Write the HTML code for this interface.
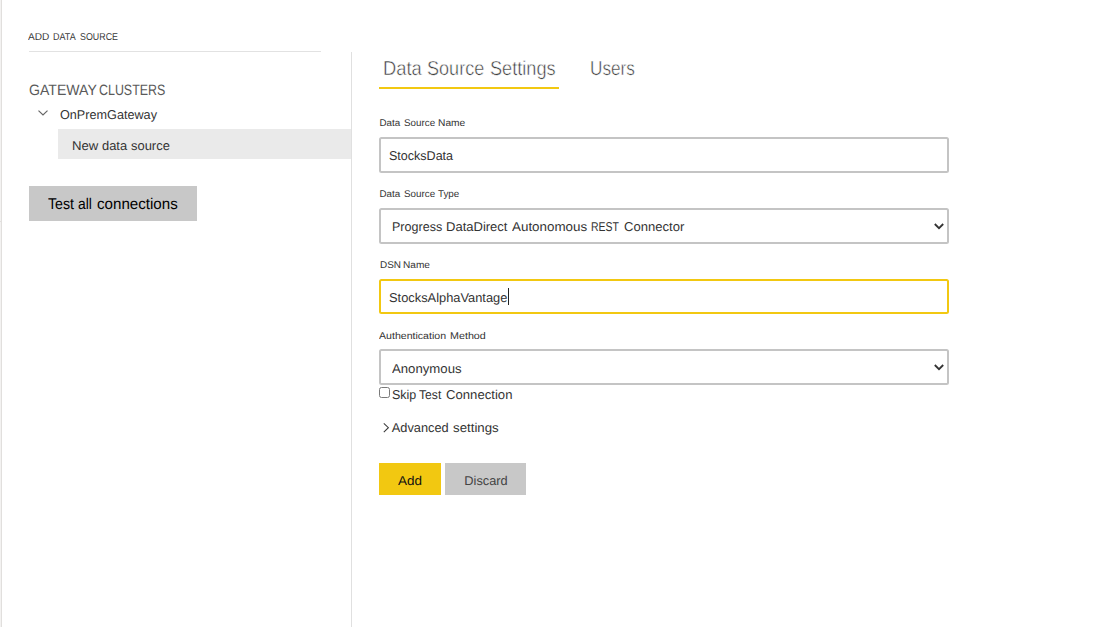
<!DOCTYPE html>
<html><head><meta charset="utf-8">
<style>
html,body{margin:0;padding:0;background:#fff;}
body{width:1112px;height:627px;position:relative;overflow:hidden;font-family:"Liberation Sans",sans-serif;color:#333;text-rendering:geometricPrecision;}
.abs{position:absolute;}
.w{position:absolute;display:inline-block;white-space:nowrap;line-height:30px;transform-origin:0 0;}
.box{position:absolute;left:379px;width:570px;box-sizing:border-box;border:2px solid #c4c4c4;background:#fff;border-radius:2.5px;}
</style></head><body>
<div class="abs" style="left:0;top:0;width:1px;height:627px;background:#f3f2f1"></div>
<div class="abs" style="left:1px;top:0;width:1px;height:627px;background:#e1dfdd"></div>
<div class="abs" style="left:0;top:221px;width:1px;height:1px;background:#e1dfdd"></div>

<div class="abs" style="left:29px;top:51px;width:292px;height:1px;background:#e2e2e2"></div>
<div class="abs" style="left:351px;top:52px;width:1px;height:575px;background:#e0e0e0"></div>

<svg class="abs" style="left:37px;top:108px" width="12" height="10" viewBox="0 0 12 10"><path d="M1.5 2.6 L6 6.9 L10.5 2.6" fill="none" stroke="#666" stroke-width="1.2"/></svg>
<div class="abs" style="left:58px;top:129px;width:293px;height:30px;background:#eaeaea"></div>
<div class="abs" style="left:29px;top:186px;width:168px;height:35px;background:#c8c8c8"></div>

<div class="abs" style="left:379px;top:87px;width:180px;height:2px;background:#f2c811"></div>

<div class="box" style="top:137px;height:36px"></div>
<div class="box" style="top:208px;height:36px">
<svg style="position:absolute;right:3px;top:13px" width="10" height="7" viewBox="0 0 10 7"><path d="M0.8 1 L5 5.2 L9.2 1" fill="none" stroke="#333" stroke-width="1.8"/></svg></div>
<div class="box" style="top:279px;height:35px;border-color:#f2c811"></div>
<div class="abs" style="left:508px;top:288px;width:1px;height:17px;background:#222"></div>
<div class="box" style="top:349px;height:36px">
<svg style="position:absolute;right:3px;top:13px" width="10" height="7" viewBox="0 0 10 7"><path d="M0.8 1 L5 5.2 L9.2 1" fill="none" stroke="#333" stroke-width="1.8"/></svg></div>

<div class="abs" style="left:379px;top:387px;width:10.8px;height:11px;box-sizing:border-box;border:1px solid #7a7a7a;border-radius:2.5px;background:#fff"></div>
<svg class="abs" style="left:382px;top:421px" width="9" height="13" viewBox="0 0 9 13"><path d="M1.8 2.3 L6.4 6.7 L1.8 11.1" fill="none" stroke="#3a3a3a" stroke-width="1.05"/></svg>

<div class="abs" style="left:379px;top:463px;width:62px;height:32px;background:#f2c811"></div>
<div class="abs" style="left:445px;top:463px;width:81px;height:32px;background:#c8c8c8"></div>
<span class="w" style="left:28.25px;top:23.00px;font-size:10px;color:#3a3a3a;transform:scaleX(1.0098)">ADD</span>
<span class="w" style="left:53.48px;top:23.00px;font-size:10px;color:#3a3a3a;transform:scaleX(0.8980)">DATA</span>
<span class="w" style="left:80.48px;top:23.00px;font-size:10px;color:#3a3a3a;transform:scaleX(0.8871)">SOURCE</span>
<span class="w" style="left:28.87px;top:76.00px;font-size:15px;color:#5a5a5a;transform:scaleX(0.9385)">GATEWAY</span>
<span class="w" style="left:98.89px;top:76.00px;font-size:15px;color:#5a5a5a;transform:scaleX(0.8289)">CLUSTERS</span>
<span class="w" style="left:59.95px;top:100.00px;font-size:12.8px;color:#333;transform:scaleX(0.9878)">OnPremGateway</span>
<span class="w" style="left:71.71px;top:131.00px;font-size:12.8px;color:#333;transform:scaleX(1.0286)">New</span>
<span class="w" style="left:101.95px;top:131.00px;font-size:12.8px;color:#333;transform:scaleX(1.0082)">data</span>
<span class="w" style="left:131.05px;top:131.00px;font-size:12.8px;color:#333;transform:scaleX(1.0107)">source</span>
<span class="w" style="left:47.77px;top:190.00px;font-size:15.5px;color:#000;transform:scaleX(0.9158)">Test</span>
<span class="w" style="left:77.98px;top:190.00px;font-size:15.5px;color:#000;transform:scaleX(0.8966)">all</span>
<span class="w" style="left:97.36px;top:190.00px;font-size:15.5px;color:#000;transform:scaleX(0.9758)">connections</span>
<span class="w" style="left:382.86px;top:54.00px;font-size:20.2px;color:#3e3e3e;-webkit-text-stroke:0.5px #fff;transform:scaleX(0.9084)">Data</span>
<span class="w" style="left:427.48px;top:54.00px;font-size:20.2px;color:#3e3e3e;-webkit-text-stroke:0.5px #fff;transform:scaleX(0.8944)">Source</span>
<span class="w" style="left:489.68px;top:54.00px;font-size:20.2px;color:#3e3e3e;-webkit-text-stroke:0.5px #fff;transform:scaleX(0.8993)">Settings</span>
<span class="w" style="left:589.94px;top:54.00px;font-size:20.2px;color:#3e3e3e;-webkit-text-stroke:0.5px #fff;transform:scaleX(0.8515)">Users</span>
<span class="w" style="left:379.55px;top:109.00px;font-size:9.8px;color:#333;transform:scaleX(1.0000)">Data</span>
<span class="w" style="left:403.55px;top:109.00px;font-size:9.8px;color:#333;transform:scaleX(1.0033)">Source</span>
<span class="w" style="left:438.04px;top:109.00px;font-size:9.8px;color:#333;transform:scaleX(1.0431)">Name</span>
<span class="w" style="left:389.06px;top:141.00px;font-size:12.8px;color:#333;transform:scaleX(0.9786)">StocksData</span>
<span class="w" style="left:379.55px;top:180.00px;font-size:9.8px;color:#333;transform:scaleX(1.0000)">Data</span>
<span class="w" style="left:403.55px;top:180.00px;font-size:9.8px;color:#333;transform:scaleX(1.0033)">Source</span>
<span class="w" style="left:437.95px;top:180.00px;font-size:9.8px;color:#333;transform:scaleX(1.0000)">Type</span>
<span class="w" style="left:391.78px;top:212.00px;font-size:12.8px;color:#333;transform:scaleX(0.9798)">Progress</span>
<span class="w" style="left:446.23px;top:212.00px;font-size:12.8px;color:#333;transform:scaleX(1.0168)">DataDirect</span>
<span class="w" style="left:511.84px;top:212.00px;font-size:12.8px;color:#333;transform:scaleX(1.0462)">Autonomous</span>
<span class="w" style="left:591.28px;top:212.00px;font-size:12.8px;color:#333;transform:scaleX(0.8185)">REST</span>
<span class="w" style="left:624.34px;top:212.00px;font-size:12.8px;color:#333;transform:scaleX(1.0222)">Connector</span>
<span class="w" style="left:379.55px;top:251.00px;font-size:9.8px;color:#333;transform:scaleX(1.0154)">DSN</span>
<span class="w" style="left:403.24px;top:251.00px;font-size:9.8px;color:#333;transform:scaleX(1.0314)">Name</span>
<span class="w" style="left:389.05px;top:283.00px;font-size:12.8px;color:#333;transform:scaleX(1.0043)">StocksAlphaVantage</span>
<span class="w" style="left:379.23px;top:322.00px;font-size:9.8px;color:#333;transform:scaleX(1.0797)">Authentication</span>
<span class="w" style="left:450.03px;top:322.00px;font-size:9.8px;color:#333;transform:scaleX(1.0954)">Method</span>
<span class="w" style="left:391.74px;top:354.00px;font-size:12.8px;color:#333;transform:scaleX(1.0296)">Anonymous</span>
<span class="w" style="left:391.56px;top:379.50px;font-size:12.8px;color:#333;transform:scaleX(0.9755)">Skip</span>
<span class="w" style="left:419.06px;top:379.50px;font-size:12.8px;color:#333;transform:scaleX(0.9489)">Test</span>
<span class="w" style="left:446.14px;top:379.50px;font-size:12.8px;color:#333;transform:scaleX(1.0268)">Connection</span>
<span class="w" style="left:391.75px;top:413.00px;font-size:12.8px;color:#333;transform:scaleX(1.0000)">Advanced</span>
<span class="w" style="left:453.14px;top:413.00px;font-size:12.8px;color:#333;transform:scaleX(1.0368)">settings</span>
<span class="w" style="left:398.04px;top:466.00px;font-size:12.8px;color:#111;transform:scaleX(1.0533)">Add</span>
<span class="w" style="left:464.35px;top:466.00px;font-size:12.8px;color:#444;transform:scaleX(1.0000)">Discard</span>
</body></html>
